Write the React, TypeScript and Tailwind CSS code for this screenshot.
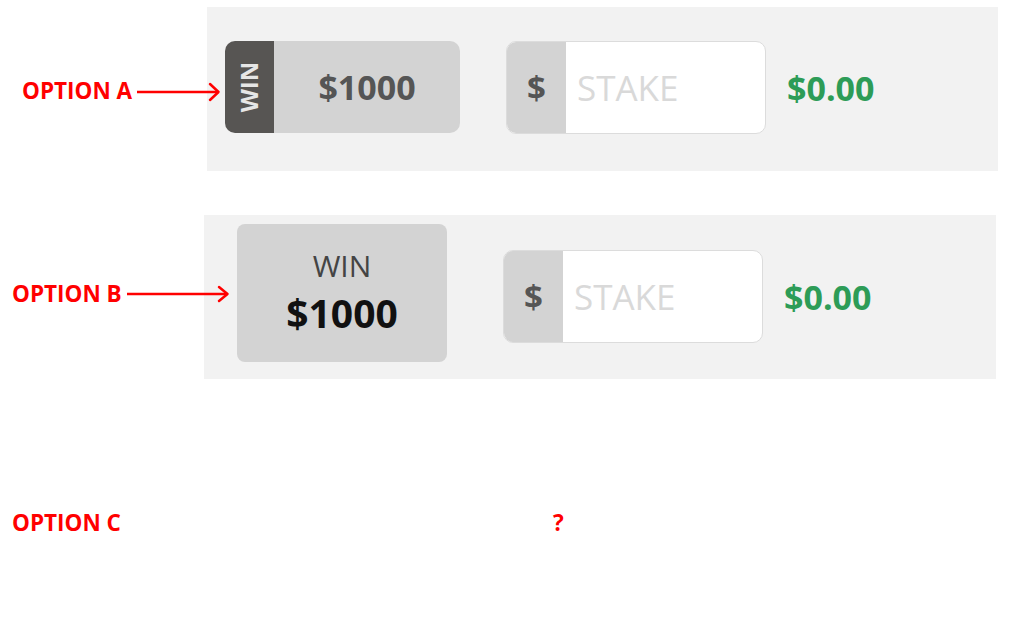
import React from "react";

function Arrow({ width, head }: { width: number; head: number }) {
  const h = head * 2 + 4;
  const cy = h / 2;
  return (
    <svg
      width={width}
      height={h}
      viewBox={`0 0 ${width} ${h}`}
      className="relative z-10 ml-[4px] shrink-0 overflow-visible"
    >
      <line x1={1} y1={cy} x2={width - 2} y2={cy} stroke="#ff0000" strokeWidth={2.5} />
      <polyline
        points={`${width - 10},${cy - head} ${width - 1.5},${cy} ${width - 10},${cy + head}`}
        fill="none"
        stroke="#ff0000"
        strokeWidth={2.5}
        strokeLinecap="round"
        strokeLinejoin="round"
      />
    </svg>
  );
}

function Stake() {
  return (
    <div className="flex h-[93px] w-[260px] overflow-hidden rounded-[10px] border border-[#dcdcdc] bg-white">
      <div className="flex w-[59px] shrink-0 items-center justify-center bg-[#d3d3d3] text-[33px] font-bold leading-none text-[#555555]">
        $
      </div>
      <input
        placeholder="STAKE"
        className="h-full w-full min-w-0 bg-transparent pl-[11px] text-[35px] leading-none text-[#333] outline-none placeholder:text-[#d9d9d9]"
      />
    </div>
  );
}

export default function App() {
  return (
    <div
      className="relative h-[624px] w-[1018px] overflow-hidden bg-white"
      style={{ fontFamily: '"Open Sans", "Noto Sans", sans-serif' }}
    >
      {/* Option A */}
      <div className="mt-[7px] flex h-[164px]">
        <div className="flex w-[207px] shrink-0 items-center pl-[22px] pt-[5px]">
          <span className="whitespace-nowrap text-[22.5px] font-bold leading-none text-[#ff0000]">
            OPTION A
          </span>
          <Arrow width={84} head={8} />
        </div>
        <div className="flex w-[791px] items-start bg-[#f2f2f2] pl-[18px] pt-[34px]">
          <div className="flex h-[92px] w-[235px] overflow-hidden rounded-[10px]">
            <div className="flex w-[49px] shrink-0 items-center justify-center bg-[#575553]">
              <span className="shrink-0 -rotate-90 whitespace-nowrap text-[24px] font-bold leading-none text-[#e6e6e6]">
                WIN
              </span>
            </div>
            <div className="flex flex-1 items-center justify-center bg-[#d3d3d3] text-[34px] font-bold leading-none text-[#555555]">
              $1000
            </div>
          </div>
          <div className="ml-[46px] flex items-center">
            <Stake />
            <span className="ml-[21px] text-[34px] font-bold leading-none text-[#2d9c57]">
              $0.00
            </span>
          </div>
        </div>
      </div>

      {/* Option B */}
      <div className="mt-[44px] flex h-[164px]">
        <div className="flex w-[204px] shrink-0 items-center pb-[6px] pl-[12px]">
          <span className="whitespace-nowrap text-[22.5px] font-bold leading-none text-[#ff0000]">
            OPTION B
          </span>
          <Arrow width={103} head={7} />
        </div>
        <div className="flex w-[792px] items-start bg-[#f2f2f2] pl-[33px] pt-[9px]">
          <div className="flex h-[138px] w-[210px] flex-col items-center justify-center rounded-[8px] bg-[#d3d3d3] pb-[4px]">
            <span className="text-[30px] leading-none text-[#444444]">WIN</span>
            <span className="mt-[12px] text-[39px] font-bold leading-none text-[#111111]">
              $1000
            </span>
          </div>
          <div className="ml-[56px] mt-[26px] flex items-center">
            <Stake />
            <span className="ml-[21px] text-[34px] font-bold leading-none text-[#2d9c57]">
              $0.00
            </span>
          </div>
        </div>
      </div>

      {/* Option C */}
      <div className="mt-[133px] flex items-center">
        <span className="w-[553px] shrink-0 whitespace-nowrap pl-[12px] text-[22.5px] font-bold leading-none text-[#ff0000]">
          OPTION C
        </span>
        <span className="text-[22.5px] font-bold leading-none text-[#ff0000]">?</span>
      </div>
    </div>
  );
}
